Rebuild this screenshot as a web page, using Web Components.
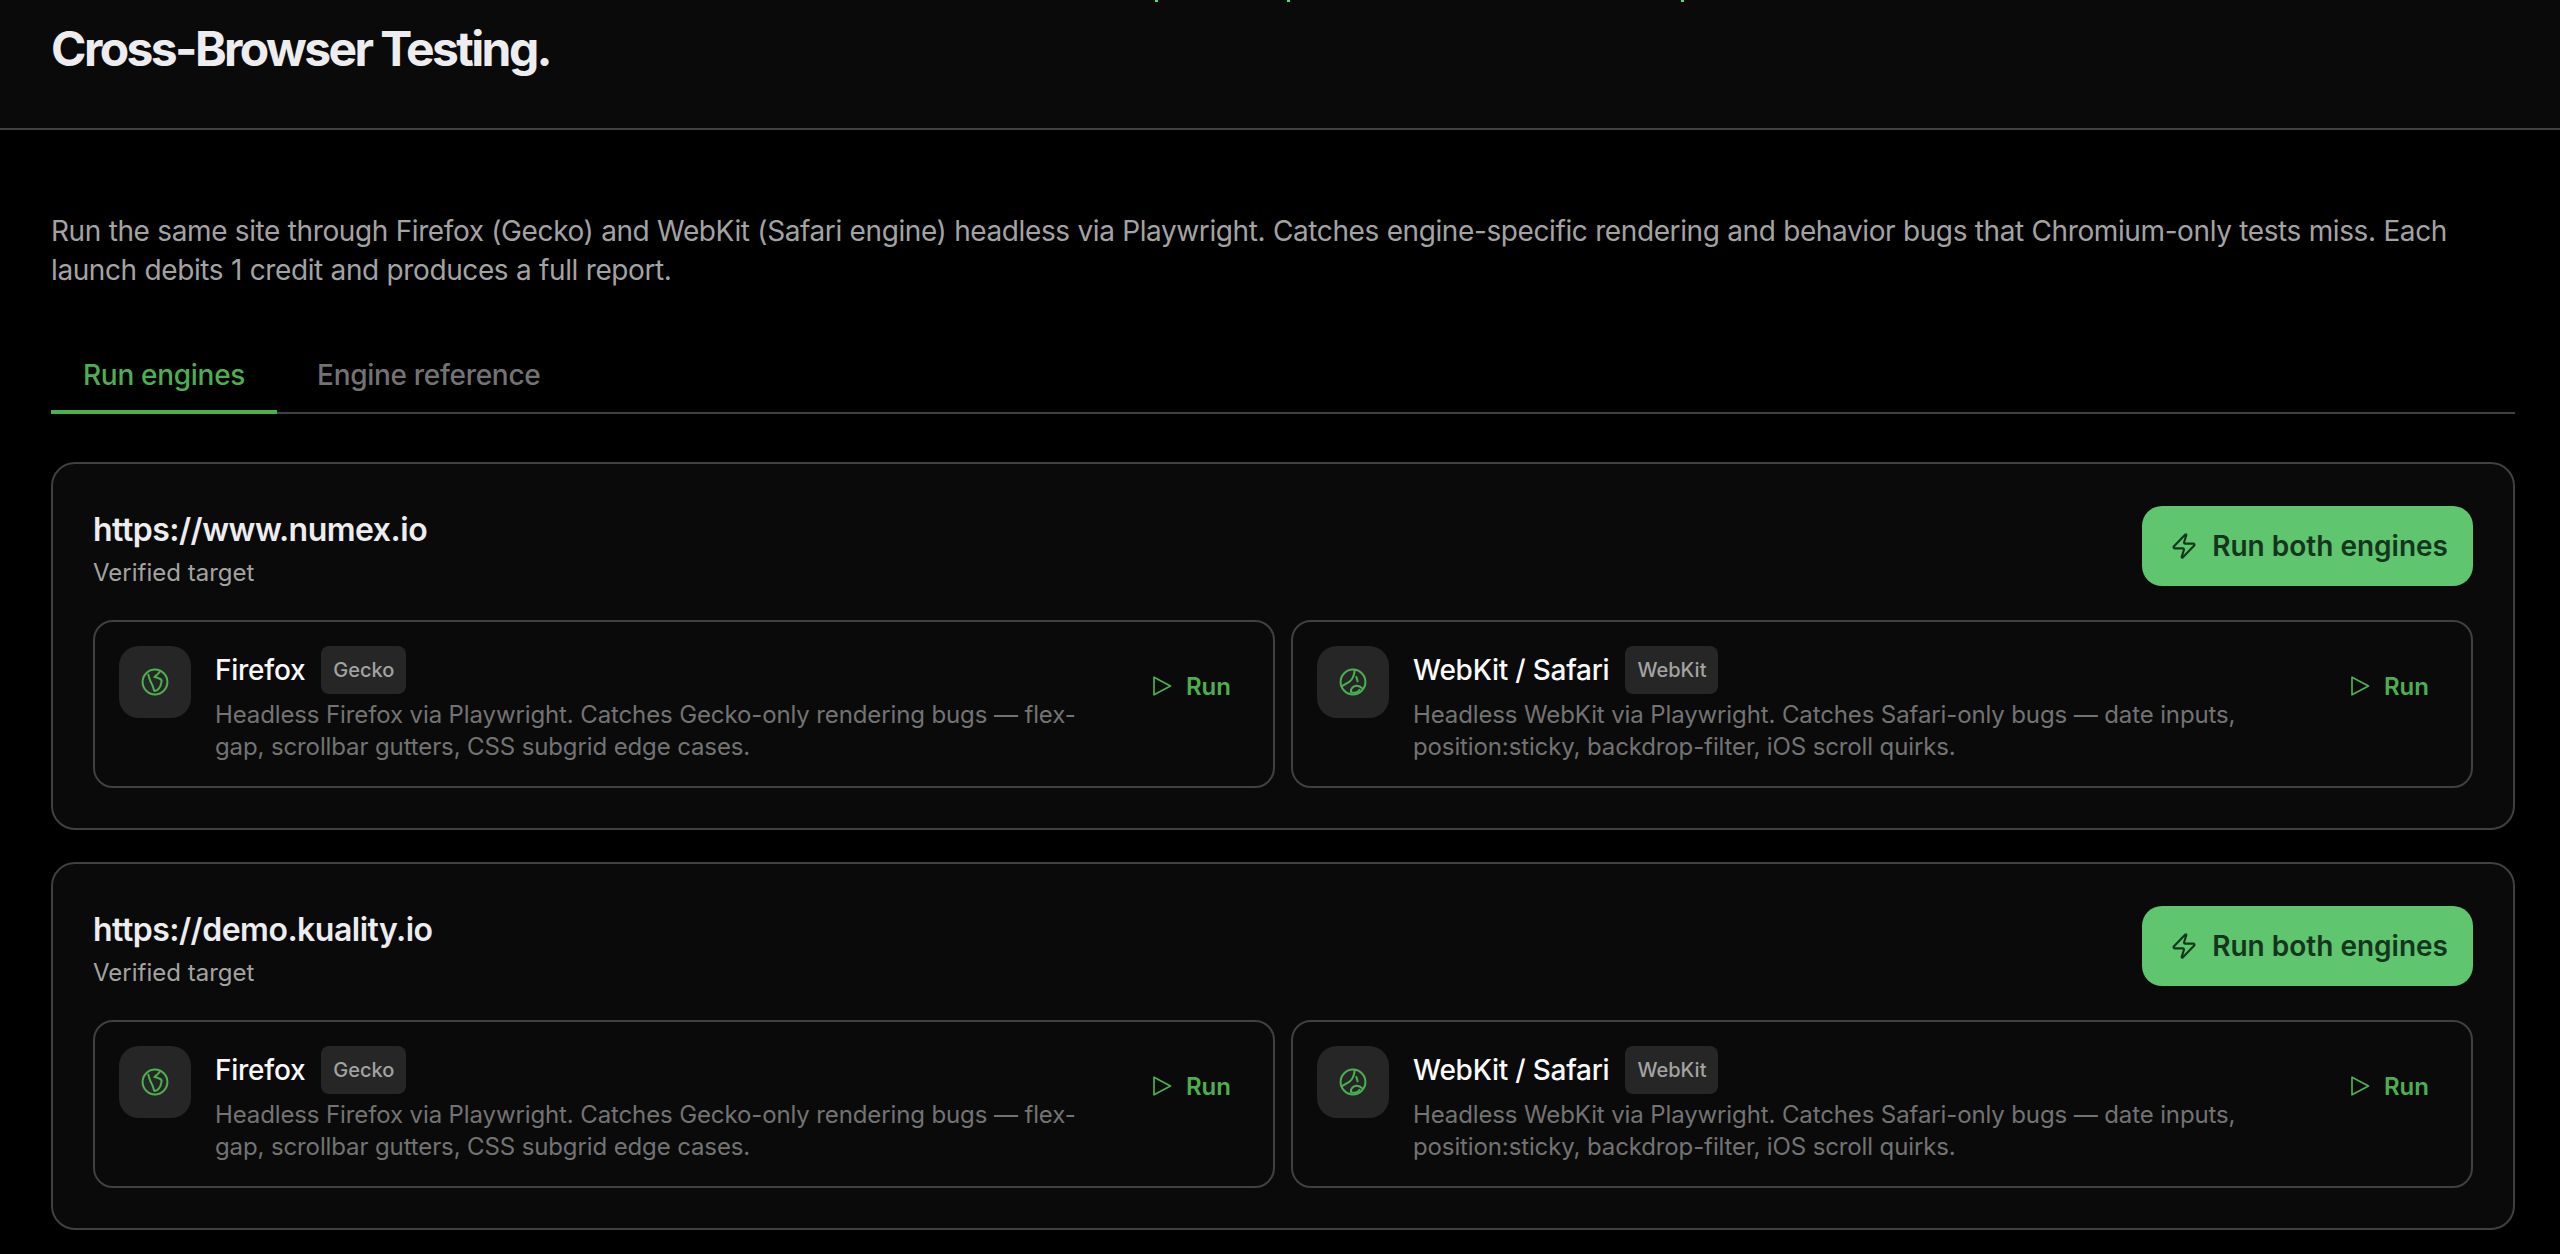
<!DOCTYPE html>
<html lang="en">
<head>
<meta charset="utf-8">
<title>Cross-Browser Testing</title>
<style>
  html, body { margin: 0; background: #000; }
  body { font-family: Inter, "Noto Sans", sans-serif; color: #fafafa; height: 1254px; overflow: hidden; }
</style>
</head>
<body>
<page-header>Cross-Browser Testing.</page-header>
<page-main>
  <intro-text>Run the same site through Firefox (Gecko) and WebKit (Safari engine) headless via Playwright. Catches engine-specific rendering and behavior bugs that Chromium-only tests miss. Each launch debits 1 credit and produces a full report.</intro-text>
  <tab-bar></tab-bar>
  <target-card url="https://www.numex.io"></target-card>
  <target-card url="https://demo.kuality.io"></target-card>
</page-main>

<script>
const ICONS = {
  firefox: `<circle cx="12" cy="12" r="9.3"/><path d="M7 6.5c.3 1.5.7 2.9 1.3 4.2.7 1.7 1.6 3.2 2.2 5 .3 1 .6 2 1 3 1.3-.2 2.3-.6 3-1.4 1.3-1.3 2.2-3.2 2.5-6.6-1-1.2-2.6-1.9-5.5-2.4.9-1.1 2.9-2 4.5-4.5"/>`,
  webkit: `<circle cx="12" cy="12" r="9.3"/><path d="M13.25 3.25c-.2 2-.5 3.6-1.25 5-.6 1.5-1.5 2.8-2.8 3.7-1.5.8-3.2 1.8-5.7 3.3"/><path d="M14.5 8.25l1 3.25"/><path d="M10.5 19.5c-.2-1.5.6-3.2 2-4 1.8-1 4.5-.7 6.7 1.5"/><path d="M11 19.8c2.2.6 4.4.1 6-2"/>`,
  play: `<path d="M4 3.2v17.6L20.5 12z"/>`,
  bolt: `<path d="M4 14a1 1 0 0 1-.78-1.63l9.9-10.2a.5.5 0 0 1 .86.46l-1.92 6.02A1 1 0 0 0 13 10h7a1 1 0 0 1 .78 1.63l-9.9 10.2a.5.5 0 0 1-.86-.46l1.92-6.02A1 1 0 0 0 11 14z"/>`,
};

function icon(name, size, sw) {
  return `<svg width="${size}" height="${size}" viewBox="0 0 24 24" fill="none" stroke="currentColor"
    stroke-width="${sw}" stroke-linecap="round" stroke-linejoin="round">${ICONS[name]}</svg>`;
}

class PageHeader extends HTMLElement {
  constructor() {
    super();
    this.attachShadow({ mode: 'open' });
    this.shadowRoot.innerHTML = `
      <style>
        :host {
          display: flex;
          align-items: center;
          box-sizing: border-box;
          position: relative;
          height: 130px;
          padding: 0 51px 30px;
          background: #0a0a0a;
          border-bottom: 2px solid #404040;
        }
        h1 { margin: 0; font-size: 48px; line-height: 60px; font-weight: 700; letter-spacing: -2.6px; color: #ededf0; }
        i { position: absolute; top: 0; width: 3px; height: 2px; background: #4ade80; }
      </style>
      <i style="left:1155px"></i><i style="left:1287px"></i><i style="left:1681px"></i>
      <h1><slot></slot></h1>`;
  }
}

class PageMain extends HTMLElement {
  constructor() {
    super();
    this.attachShadow({ mode: 'open' });
    this.shadowRoot.innerHTML = `
      <style>
        :host { display: block; box-sizing: border-box; width: 2515px; padding: 82px 0 0 51px; }
      </style>
      <slot></slot>`;
  }
}

class IntroText extends HTMLElement {
  constructor() {
    super();
    this.attachShadow({ mode: 'open' });
    this.shadowRoot.innerHTML = `
      <style>
        :host { display: block; font-size: 28px; line-height: 39px; letter-spacing: -0.4px; word-spacing: 0.3px; color: #a3a3a3; }
      </style>
      <slot></slot>`;
  }
}

class TabBar extends HTMLElement {
  constructor() {
    super();
    this.attachShadow({ mode: 'open' });
    this.shadowRoot.innerHTML = `
      <style>
        :host {
          display: flex;
          align-items: flex-start;
          gap: 8px;
          margin: 50px 0 48px;
          height: 74px;
          box-sizing: border-box;
          border-bottom: 2px solid #404040;
        }
        .tab { padding: 0 32px; font-size: 28px; line-height: 70px; font-weight: 500; letter-spacing: -0.3px; color: #737373; }
        .on { color: #4caf50; border-bottom: 4px solid #4caf50; }
      </style>
      <div class="tab on">Run engines</div>
      <div class="tab">Engine reference</div>`;
  }
}

class EngineCard extends HTMLElement {
  constructor() {
    super();
    this.attachShadow({ mode: 'open' });
  }
  connectedCallback() {
    const kind = this.getAttribute('icon');
    this.shadowRoot.innerHTML = `
      <style>
        :host {
          display: flex;
          align-items: flex-start;
          gap: 24px;
          box-sizing: border-box;
          height: 168px;
          padding: 24px;
          border: 2px solid #404040;
          border-radius: 20px;
        }
        .ico {
          flex: none;
          display: flex;
          align-items: center;
          justify-content: center;
          width: 72px;
          height: 72px;
          border-radius: 20px;
          background: #262626;
          color: #4caf50;
        }
        .body { flex: 1; min-width: 0; }
        .head { display: flex; align-items: center; gap: 16px; height: 48px; }
        .name { font-size: 28px; font-weight: 500; letter-spacing: -0.25px; color: #fafafa; }
        .badge {
          padding: 0 12px;
          font-size: 20px;
          line-height: 48px;
          font-weight: 500;
          color: #a3a3a3;
          background: #262626;
          border-radius: 8px;
        }
        p { margin: 5px 0 0; font-size: 24px; line-height: 32px; letter-spacing: -0.12px; color: #737373; }
        .run {
          flex: none;
          display: flex;
          align-items: center;
          gap: 12px;
          height: 80px;
          padding: 0 18px;
          font-size: 24px;
          font-weight: 600;
          color: #4caf50;
        }
      </style>
      <div class="ico">${icon(kind, 32, 1.5)}</div>
      <div class="body">
        <div class="head"><span class="name">${this.getAttribute('name')}</span><span class="badge">${this.getAttribute('badge')}</span></div>
        <p><slot></slot></p>
      </div>
      <div class="run">${icon('play', 24, 1.7)}<span>Run</span></div>`;
  }
}

class TargetCard extends HTMLElement {
  constructor() {
    super();
    this.attachShadow({ mode: 'open' });
  }
  connectedCallback() {
    this.shadowRoot.innerHTML = `
      <style>
        :host {
          display: block;
          box-sizing: border-box;
          height: 368px;
          margin-top: 32px;
          padding: 40px;
          border: 2px solid #404040;
          border-radius: 24px;
          background: #0a0a0a;
        }
        .top { display: flex; justify-content: space-between; align-items: flex-start; height: 116px; }
        .url { font-size: 32px; line-height: 52px; font-weight: 600; letter-spacing: -0.5px; color: #ededf0; }
        .sub { font-size: 24px; line-height: 34px; color: #a3a3a3; }
        button {
          display: flex;
          align-items: center;
          gap: 14px;
          box-sizing: border-box;
          height: 80px;
          margin-top: 2px;
          padding: 0 25px 0 28px;
          border: 0;
          border-radius: 20px;
          background: #5fc56e;
          color: #14361c;
          font: 600 28px Inter, sans-serif;
        }
        .grid { display: grid; grid-template-columns: 1fr 1fr; gap: 16px; }
      </style>
      <div class="top">
        <div><div class="url">${this.getAttribute('url')}</div><div class="sub">Verified target</div></div>
        <button>${icon('bolt', 28, 1.8)}Run both engines</button>
      </div>
      <div class="grid">
        <engine-card icon="firefox" name="Firefox" badge="Gecko">Headless Firefox via Playwright. Catches Gecko-only rendering bugs — flex-gap, scrollbar gutters, CSS subgrid edge cases.</engine-card>
        <engine-card icon="webkit" name="WebKit / Safari" badge="WebKit">Headless WebKit via Playwright. Catches Safari-only bugs — date inputs, position:sticky, backdrop-filter, iOS scroll quirks.</engine-card>
      </div>`;
  }
}

customElements.define('page-header', PageHeader);
customElements.define('page-main', PageMain);
customElements.define('intro-text', IntroText);
customElements.define('tab-bar', TabBar);
customElements.define('engine-card', EngineCard);
customElements.define('target-card', TargetCard);
</script>
</body>
</html>
